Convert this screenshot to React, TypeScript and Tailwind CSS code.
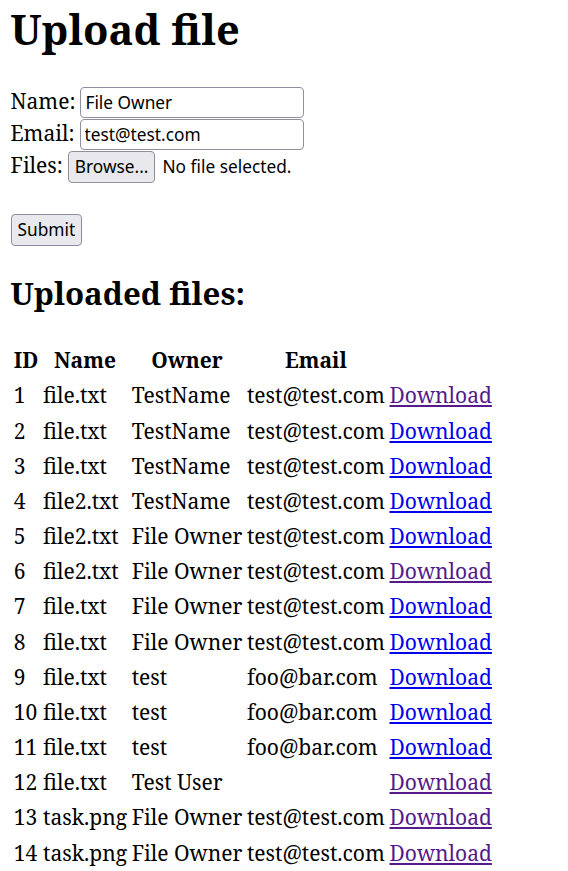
const rows = [
  { id: 1, name: 'file.txt', owner: 'TestName', email: 'test@test.com', visited: true },
  { id: 2, name: 'file.txt', owner: 'TestName', email: 'test@test.com', visited: false },
  { id: 3, name: 'file.txt', owner: 'TestName', email: 'test@test.com', visited: false },
  { id: 4, name: 'file2.txt', owner: 'TestName', email: 'test@test.com', visited: false },
  { id: 5, name: 'file2.txt', owner: 'File Owner', email: 'test@test.com', visited: false },
  { id: 6, name: 'file2.txt', owner: 'File Owner', email: 'test@test.com', visited: true },
  { id: 7, name: 'file.txt', owner: 'File Owner', email: 'test@test.com', visited: false },
  { id: 8, name: 'file.txt', owner: 'File Owner', email: 'test@test.com', visited: false },
  { id: 9, name: 'file.txt', owner: 'test', email: 'foo@bar.com', visited: false },
  { id: 10, name: 'file.txt', owner: 'test', email: 'foo@bar.com', visited: false },
  { id: 11, name: 'file.txt', owner: 'test', email: 'foo@bar.com', visited: false },
  { id: 12, name: 'file.txt', owner: 'Test User', email: '', visited: true },
  { id: 13, name: 'task.png', owner: 'File Owner', email: 'test@test.com', visited: true },
  { id: 14, name: 'task.png', owner: 'File Owner', email: 'test@test.com', visited: true },
]

const serif = "font-['Noto_Serif','DejaVu_Serif',serif]"
const sans = "font-['Noto_Sans','Open_Sans',sans-serif]"
const field = `${sans} ml-[5px] h-[31px] w-[224px] rounded-[4px] border border-[#8f8f9d] bg-white px-[4px] text-[17.3px] text-black outline-none`
const btn = `${sans} h-[32px] rounded-[4px] border border-[#8f8f9d] bg-[#e9e9ed] px-[6px] text-[17.3px] text-black`
const cell = 'px-[1.33px] py-[1.33px] leading-[30.5px]'

export default function App() {
  return (
    <div className={`${serif} min-h-[871px] bg-white px-[10.5px] text-[21px] text-black`}>
      <h1 className="text-[41.6px] font-bold leading-[58px]">Upload file</h1>
      <form className="mt-[28px]" onSubmit={(e) => e.preventDefault()}>
        <div className="flex h-[32px] items-baseline">
          <span>Name:</span>
          <input defaultValue="File Owner" className={field} />
        </div>
        <div className="flex h-[32px] items-baseline">
          <span>Email:</span>
          <input defaultValue="test@test.com" className={field} />
        </div>
        <div className="flex h-[32px] items-baseline">
          <span>Files:</span>
          <button type="button" className={`${btn} ml-[5px]`}>
            Browse...
          </button>
          <span className={`${sans} ml-[7px] text-[17.3px]`}>No file selected.</span>
        </div>
        <div className="mt-[32px] flex h-[31px]">
          <button type="submit" className={btn}>
            Submit
          </button>
        </div>
      </form>
      <h2 className="mt-[27px] text-[31.2px] font-bold leading-[43px]">Uploaded files:</h2>
      <table className="mt-[27px] border-separate border-spacing-[2px]">
        <thead>
          <tr>
            <th className={cell}>ID</th>
            <th className={cell}>Name</th>
            <th className={cell}>Owner</th>
            <th className={cell}>Email</th>
            <th className={cell}></th>
          </tr>
        </thead>
        <tbody>
          {rows.map((r) => (
            <tr key={r.id}>
              <td className={cell}>{r.id}</td>
              <td className={cell}>{r.name}</td>
              <td className={cell}>{r.owner}</td>
              <td className={cell}>{r.email}</td>
              <td className={cell}>
                <a href="#" className={r.visited ? 'text-[#551a8b] underline' : 'text-[#0000ee] underline'}>
                  Download
                </a>
              </td>
            </tr>
          ))}
        </tbody>
      </table>
    </div>
  )
}
